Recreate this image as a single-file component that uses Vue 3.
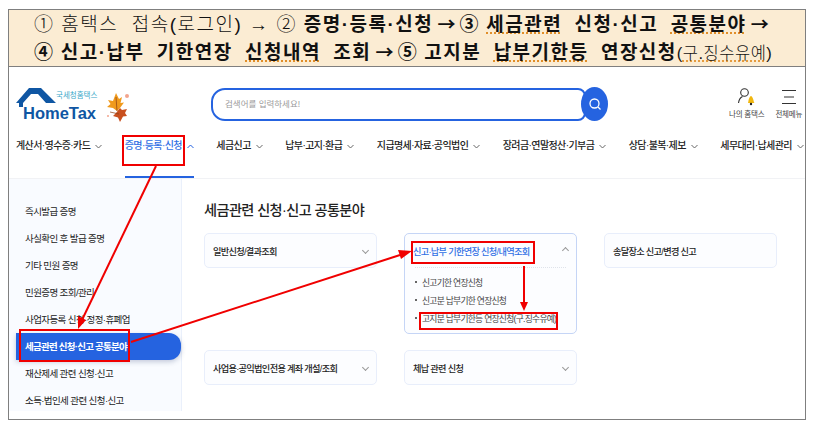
<template>
  <div class="page">
    <div class="frame">
      <div class="banner">
        <p class="line">
          <span class="thin">① 홈택스&nbsp; 접속(로그인) → ② </span><b>증명·등록·신청 <span class="arrow">→</span> ③ <u>세금관련</u>&nbsp; 신청·신고&nbsp; <u>공통분야</u> <span class="arrow">→</span></b>
        </p>
        <p class="line">
          <b>④ 신고·납부&nbsp; 기한연장&nbsp; <u>신청내역</u>&nbsp; 조회 <span class="arrow">→</span> ⑤ 고지분&nbsp; <u>납부기한등</u>&nbsp; 연장신청</b><span class="thin small">(<u>구.징수유예</u>)</span>
        </p>
      </div>

      <header class="header">
        <div class="logo">
          <svg class="house" width="44" height="20" viewBox="0 0 44 20">
            <path d="M0 15 L13 0 H25 L40 15 H30 L22 6 H15 L7 15 V19 H3 V15 Z" fill="#0f56a3" />
          </svg>
          <span class="logo-sub">국세청홈택스</span>
          <span class="logo-main">HomeTax</span>
        </div>
        <svg class="leaf" width="24" height="32" viewBox="0 0 24 32">
          <path d="M11 1 L14 7 L17 5 L15.500 11 L19 10.500 L15 16 L12 19 L8 16 L2 15 L5.500 12 L3 8 L8 9 Z" fill="#f09a1c" />
          <path d="M15 16 L17 18 L22 17 L20 21 L22 24 L18 24.500 L15 30 L13 25.500 L8 24 L11 21 Z" fill="#c9501f" />
          <path d="M5 20 L14 22 M11 5 L12 19" stroke="#8a3c12" stroke-width="0.700" fill="none" />
          <circle cx="22" cy="4" r="2" fill="#f2a48e" />
          <circle cx="3" cy="24" r="1" fill="#f2a48e" />
        </svg>
        <div class="search">
          <div class="search-box">검색어를 입력하세요!</div>
          <div class="search-btn">
            <svg width="14" height="14" viewBox="0 0 14 14" fill="none" stroke="#fff" stroke-width="1.300">
              <circle cx="6.500" cy="6.500" r="4.500" />
              <path d="M10 10 L12.500 12.500" />
            </svg>
          </div>
        </div>
        <div class="utils">
          <div class="util">
            <svg width="20" height="20" viewBox="0 0 20 20">
              <circle cx="7.500" cy="5.500" r="3.800" fill="none" stroke="#333" stroke-width="1.100" />
              <path d="M1.500 16 C2 12.500 3.500 10.500 5.500 9.500" fill="none" stroke="#333" stroke-width="1.100" />
              <path d="M11 16 C11.500 15 11.500 10 14 9 C16.500 10 16.500 15 17.500 16 Z" fill="#f1b70f" />
              <circle cx="14" cy="17" r="1.200" fill="#222" />
            </svg>
            <span>나의 홈택스</span>
          </div>
          <div class="util">
            <svg width="20" height="20" viewBox="0 0 20 20" stroke="#333" stroke-width="1.200">
              <path d="M3 3.500 H17 M5 10 H15 M3 16.500 H17" />
            </svg>
            <span>전체메뉴</span>
          </div>
        </div>
      </header>

      <nav class="nav">
        <div v-for="item in navItems" :key="item" class="nav-item" :class="{ on: item === activeNav }">
          <span>{{ item }}</span>
          <svg width="7" height="5" viewBox="0 0 7 5" fill="none" stroke="currentColor" stroke-width="1">
            <path :d="item === activeNav ? 'M0.500 4 L3.500 1 L6.500 4' : 'M0.500 1 L3.500 4 L6.500 1'" />
          </svg>
        </div>
      </nav>

      <div class="body">
        <aside class="side">
          <div v-for="item in sideItems" :key="item" class="side-item" :class="{ on: item === activeSide }">{{ item }}</div>
        </aside>
        <main class="content">
          <h2 class="title">세금관련 신청·신고 공통분야</h2>
          <div class="cards">
            <div class="card"><div class="card-head"><span class="dim">일반신청/결과조회</span><i class="chev"></i></div></div>
            <div class="card open">
              <div class="card-head"><span class="blue">신고·납부 기한연장 신청/내역조회</span><i class="chev up"></i></div>
              <ul class="sub">
                <li>신고기한 연장신청</li>
                <li>신고분 납부기한 연장신청</li>
                <li>고지분 납부기한등 연장신청(구.징수유예)</li>
              </ul>
            </div>
            <div class="card"><div class="card-head"><span class="dim">송달장소 신고/변경 신고</span></div></div>
            <div class="card"><div class="card-head"><span class="dim">사업용·공익법인전용 계좌 개설/조회</span><i class="chev"></i></div></div>
            <div class="card"><div class="card-head"><span class="dim">체납 관련 신청</span><i class="chev"></i></div></div>
          </div>
        </main>
      </div>
    </div>

    <svg class="marks" width="822" height="428" viewBox="0 0 822 428" fill="none">
      <g stroke="#f00000" stroke-width="2">
        <rect x="123" y="136" width="61" height="29" />
        <rect x="20" y="330" width="109" height="31" />
        <rect x="412" y="242" width="122" height="21" />
        <rect x="420" y="313" width="137" height="16" />
        <path d="M156 166 L81 322" />
        <path d="M131 342 L400 255" />
        <path d="M524 266 L524 304" />
      </g>
      <g fill="#f00000">
        <path d="M78 329 L78 316 L86 320 Z" />
        <path d="M412 251 L398 250 L401 259 Z" />
        <path d="M524 311 L520 302 L528 302 Z" />
      </g>
    </svg>
  </div>
</template>

<script setup>
const navItems = [
  '계산서·영수증·카드',
  '증명·등록·신청',
  '세금신고',
  '납부·고지·환급',
  '지급명세·자료·공익법인',
  '장려금·연말정산·기부금',
  '상담·불복·제보',
  '세무대리·납세관리',
]
const activeNav = '증명·등록·신청'

const sideItems = [
  '즉시발급 증명',
  '사실확인 후 발급 증명',
  '기타 민원 증명',
  '민원증명 조회/관리',
  '사업자등록 신청·정정·휴폐업',
  '세금관련 신청·신고 공통분야',
  '재산제세 관련 신청·신고',
  '소득·법인세 관련 신청·신고',
]
const activeSide = '세금관련 신청·신고 공통분야'
</script>

<style>
html, body {
  margin: 0;
  background: #fff;
}
</style>

<style scoped>
.page {
  position: relative;
  width: 822px;
  height: 428px;
  padding: 9px 0 0 8px;
  box-sizing: border-box;
  overflow: hidden;
  font-family: "Liberation Sans", "Noto Sans CJK KR", sans-serif;
  color: #333;
}

.frame {
  width: 798px;
  height: 411px;
  border: 1px solid #7f7f7f;
  box-sizing: border-box;
  display: flex;
  flex-direction: column;
}

.banner {
  height: 57px;
  flex: none;
  background: #fbecd3;
  border-bottom: 1px solid #7f7f7f;
  box-sizing: border-box;
  padding: 0 0 0 25px;
  color: #111;
}

.line {
  margin: 0;
  height: 27.500px;
  line-height: 27.500px;
  font-size: 19px;
  letter-spacing: 1.500px;
  white-space: nowrap;
}

.line b {
  font-weight: 700;
  word-spacing: -0.600px;
}

.line u {
  text-decoration: underline dotted #e08a20;
  text-underline-offset: 2px;
}

.arrow {
  font-family: "Noto Sans CJK KR", sans-serif;
  font-size: 18px;
  letter-spacing: 0;
  margin: 0 -2px;
}

.thin {
  font-weight: 300;
}

.small {
  font-size: 16.500px;
  letter-spacing: 0.500px;
}

.header {
  height: 54px;
  flex: none;
  display: flex;
  align-items: flex-start;
  padding-left: 7px;
}

.logo {
  position: relative;
  width: 82px;
  height: 38px;
  margin-top: 21px;
}

.house {
  position: absolute;
  left: 0;
  top: 0;
}

.logo-sub {
  position: absolute;
  left: 40px;
  top: 3px;
  font-size: 7.500px;
  line-height: 10px;
  color: #3aa9c9;
  white-space: nowrap;
}

.logo-main {
  position: absolute;
  left: 7px;
  top: 15px;
  font-weight: 700;
  font-size: 16.500px;
  line-height: 20px;
  color: #0f56a3;
  white-space: nowrap;
}

.leaf {
  margin: 25px 0 0 7px;
}

.search {
  display: flex;
  align-items: center;
  margin: 20px 0 0 82px;
}

.search-box {
  width: 375px;
  height: 33px;
  border: 2px solid #2563e0;
  border-radius: 14px 8px 8px 14px;
  box-sizing: border-box;
  padding-left: 12px;
  font-size: 8.500px;
  line-height: 29px;
  color: #9a9a9a;
}

.search-btn {
  width: 27px;
  height: 34px;
  margin-left: -5px;
  border-radius: 50%;
  background: #2563e0;
  display: flex;
  align-items: center;
  justify-content: center;
}

.utils {
  display: flex;
  gap: 11px;
  margin: 20px 0 0 121px;
}

.util {
  display: flex;
  flex-direction: column;
  align-items: center;
  gap: 3px;
  font-size: 7.500px;
  letter-spacing: -0.200px;
  line-height: 10px;
  color: #444;
  white-space: nowrap;
}

.nav {
  height: 57px;
  flex: none;
  display: flex;
  align-items: flex-start;
  padding-left: 7px;
}

.nav-item {
  height: 57px;
  box-sizing: border-box;
  padding-top: 17px;
  display: flex;
  align-items: flex-start;
  gap: 5px;
  margin-right: 22.500px;
  font-size: 10px;
  letter-spacing: -0.600px;
  line-height: 16px;
  font-weight: 500;
  color: #222;
  white-space: nowrap;
}

.nav-item svg {
  margin-top: 6px;
  color: #666;
}

.nav-item.on {
  color: #2f6fe4;
  border-bottom: 2px solid #2563e0;
}

.nav-item.on svg {
  color: #2563e0;
}

.body {
  flex: none;
  height: 232px;
  display: flex;
  border-top: 1px solid #f1f2f5;
}

.side {
  width: 173px;
  flex: none;
  background: #f9fbff;
  border-right: 1px solid #eaf0fb;
  box-sizing: border-box;
  padding: 19px 0 0 7px;
}

.side-item {
  height: 27px;
  padding-left: 9px;
  font-size: 9.500px;
  letter-spacing: -0.600px;
  line-height: 27px;
  color: #222;
  white-space: nowrap;
}

.side-item.on {
  background: #2563e0;
  color: #fff;
  font-weight: 700;
  letter-spacing: -0.750px;
  border-radius: 0 12px 12px 0;
  box-shadow: 0 2px 5px rgba(40, 60, 110, 0.250);
}

.content {
  flex: 1;
  padding: 21px 0 0 22px;
}

.title {
  margin: 0;
  font-size: 14.200px;
  letter-spacing: -0.600px;
  line-height: 20px;
  font-weight: 500;
  color: #222;
}

.cards {
  display: grid;
  grid-template-columns: repeat(3, 173px);
  grid-template-rows: 101px 35px;
  column-gap: 27px;
  row-gap: 16px;
  margin-top: 13px;
  align-items: start;
}

.card {
  border: 1px solid #e8eefb;
  border-radius: 5px;
  background: #fcfdff;
  box-sizing: border-box;
  height: 35px;
}

.card.open {
  height: 101px;
  border-color: #c5d5f6;
  grid-row: 1;
  grid-column: 2;
}

.card-head {
  display: flex;
  align-items: center;
  justify-content: space-between;
  height: 33px;
  padding: 0 8px;
  font-size: 9.200px;
  letter-spacing: -0.700px;
  font-weight: 500;
  white-space: nowrap;
}

.dim {
  color: #222;
}

.blue {
  color: #2f6fe4;
}

.chev {
  width: 4px;
  height: 4px;
  border-right: 1px solid #999;
  border-bottom: 1px solid #999;
  transform: rotate(45deg);
}

.chev.up {
  transform: rotate(225deg);
}

.sub {
  list-style: none;
  margin: 0 10px;
  padding: 6px 0 0;
  border-top: 1px dotted #dfe3ea;
  font-size: 8.800px;
  letter-spacing: -0.750px;
  line-height: 18px;
  color: #444;
  white-space: nowrap;
}

.sub li {
  padding-left: 7px;
  position: relative;
}

.sub li::before {
  content: "";
  position: absolute;
  left: 0;
  top: 7px;
  width: 2px;
  height: 2px;
  background: #666;
}

.marks {
  position: absolute;
  left: 0;
  top: 0;
  pointer-events: none;
}
</style>
